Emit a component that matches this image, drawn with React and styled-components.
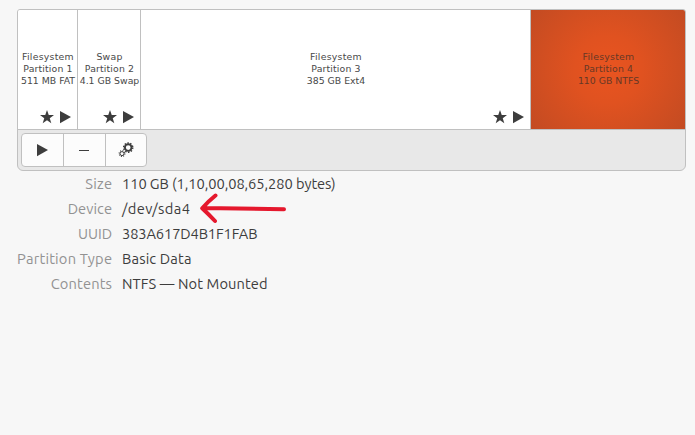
import React from "react";
import styled, { createGlobalStyle } from "styled-components";

const Global = createGlobalStyle`
  * { box-sizing: border-box; }
  body { margin: 0; background: #f7f7f7; }
`;

const Page = styled.main`
  position: relative;
  width: 695px;
  height: 435px;
  padding: 9px 9px 0 17px;
  background: #f7f7f7;
  overflow: hidden;
  color: #3d3d3d;
  font-family: Ubuntu, "Noto Sans", sans-serif;
`;

const VolumePanel = styled.section`
  width: 669px;
  height: 162px;
  border: 1px solid #c0c0c0;
  border-radius: 3px 3px 6px 6px;
  background: #e8e8e8;
  overflow: hidden;
`;

const VolumeGrid = styled.div`
  display: grid;
  grid-template-columns: 60px 63px 390px 154px;
  height: 120px;
  border-bottom: 1px solid #c0c0c0;
`;

const Partition = styled.div`
  display: grid;
  grid-template-rows: 41px 36px 1fr;
  border-right: ${(p) => (p.$selected ? "none" : "1px solid #c0c0c0")};
  background: ${(p) =>
    p.$selected
      ? "radial-gradient(circle 97px at 50% 50%, #e95420 0%, #e05220 35%, #c34b22 100%)"
      : "#fff"};
  color: ${(p) => (p.$selected ? "#663826" : "#484848")};
`;

const PartitionLabel = styled.div`
  grid-row: 2;
  display: flex;
  flex-direction: column;
  align-items: center;
  padding-left: 1px;
  font: 9.33px/12px "DejaVu Sans", sans-serif;
  white-space: nowrap;
`;

const LabelLine = styled.span`
  letter-spacing: ${(p) => p.$tracking}px;
`;

const Badges = styled.div`
  grid-row: 3;
  display: flex;
  justify-content: flex-end;
  gap: 2px;
  padding: 22px 4px 0 0;
  color: #3d3d3d;
`;

const Icon = styled.svg`
  display: block;
  width: 16px;
  height: 16px;
  flex: none;
`;

const Toolbar = styled.div`
  display: flex;
  padding: 3px;
`;

const ButtonGroup = styled.div`
  display: grid;
  grid-template-columns: 42px 42px 40px;
  width: 126px;
  height: 34px;
  border: 1px solid #c0c0c0;
  border-radius: 4px;
  background: #fcfcfc;
  overflow: hidden;
`;

const ToolButton = styled.button`
  display: flex;
  align-items: center;
  justify-content: flex-start;
  padding: 0 0 0 12px;
  border: 0;
  border-right: ${(p) => (p.$last ? "0" : "1px solid #c0c0c0")};
  background: transparent;
  color: #3d3d3d;
`;

const Details = styled.dl`
  display: grid;
  grid-template-columns: 95px 1fr;
  grid-auto-rows: 25px;
  column-gap: 10px;
  margin: 0;
  font-size: 14.67px;
  line-height: 25px;
  white-space: nowrap;
`;

const Term = styled.dt`
  justify-self: end;
  color: #929292;
  letter-spacing: ${(p) => p.$tracking || 0}px;
  margin-right: ${(p) => -(p.$tracking || 0)}px;
`;

const Value = styled.dd`
  margin: 0;
  letter-spacing: ${(p) => p.$tracking || 0}px;
`;

const Arrow = styled.svg`
  position: absolute;
  left: 195px;
  top: 188px;
  width: 95px;
  height: 40px;
`;

const Play = () => (
  <Icon viewBox="0 0 16 16"><path d="M3 2v12.2L14 8.1z" fill="currentColor" /></Icon>
);

const Star = () => (
  <Icon viewBox="0 0 16 16">
    <path d="M8 1l1.75 5H15l-4.25 3.3L12.3 14.3 8 11.3l-4.3 3 1.55-5L1 6h5.25z" fill="currentColor" />
  </Icon>
);

const Minus = () => (
  <Icon viewBox="0 0 16 16"><path d="M3 8h10v1H3z" fill="currentColor" /></Icon>
);

const Gears = () => (
  <Icon viewBox="0 0 16 16" fill="none" stroke="currentColor">
    <circle cx="10.2" cy="5.6" r="3.3" strokeWidth="1.9" />
    <circle cx="10.2" cy="5.6" r="4.6" strokeWidth="1.4" strokeDasharray="1.5 1.39" />
    <circle cx="4" cy="11.6" r="2" strokeWidth="1" />
    <circle cx="4" cy="11.6" r="2.9" strokeWidth="1.1" strokeDasharray="1 1.278" />
  </Icon>
);

const partitions = [
  { lines: ["Filesystem", "Partition 1", "511 MB FAT"], mounted: true },
  { lines: ["Swap", "Partition 2", "4.1 GB Swap"], mounted: true },
  { lines: ["Filesystem", "Partition 3", "385 GB Ext4"], mounted: true },
  { lines: ["Filesystem", "Partition 4", "110 GB NTFS"], selected: true },
];

const lineTracking = [0.25, 0.15, 0];

const details = [
  ["Size", "110 GB (1,10,00,08,65,280 bytes)", 0.25, -0.07],
  ["Device", "/dev/sda4", 0.05, 0.4],
  ["UUID", "383A617D4B1F1FAB", 0, -0.12],
  ["Partition Type", "Basic Data", 0.2, 0.15],
  ["Contents", "NTFS — Not Mounted", 0.15, 0.1],
];

export default function App() {
  return (
    <Page>
      <Global />
      <VolumePanel>
        <VolumeGrid>
          {partitions.map((p) => (
            <Partition key={p.lines[1]} $selected={p.selected}>
              <PartitionLabel>
                {p.lines.map((line, i) => (
                  <LabelLine key={line} $tracking={lineTracking[i]}>{line}</LabelLine>
                ))}
              </PartitionLabel>
              {p.mounted && <Badges><Star /><Play /></Badges>}
            </Partition>
          ))}
        </VolumeGrid>
        <Toolbar>
          <ButtonGroup>
            <ToolButton aria-label="Mount"><Play /></ToolButton>
            <ToolButton aria-label="Delete"><Minus /></ToolButton>
            <ToolButton aria-label="Options" $last><Gears /></ToolButton>
          </ButtonGroup>
        </Toolbar>
      </VolumePanel>
      <Details>
        {details.map(([term, value, tt, vt]) => (
          <React.Fragment key={term}>
            <Term $tracking={tt}>{term}</Term>
            <Value $tracking={vt}>{value}</Value>
          </React.Fragment>
        ))}
      </Details>
      <Arrow viewBox="0 0 95 40" fill="none" stroke="#e5182d" strokeWidth="4" strokeLinecap="round" strokeLinejoin="round">
        <path d="M89 21.2L8 20M20.5 7.5Q13 13.5 7.2 20.2Q14 26.5 20 33" />
      </Arrow>
    </Page>
  );
}
